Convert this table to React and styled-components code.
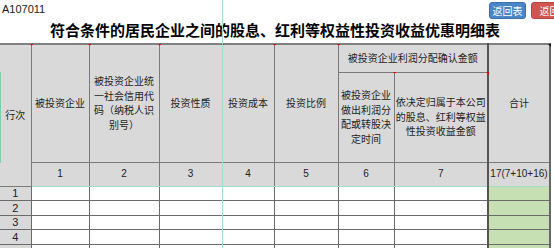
import React from 'react';
import styled, { createGlobalStyle } from 'styled-components';

const Global = createGlobalStyle`
  html, body { margin: 0; padding: 0; background: #fff; overflow: hidden; }
  body { font-family: "Liberation Sans", Arial, sans-serif; }
`;

const Page = styled.div`
  position: relative;
  width: 554px;
  height: 248px;
  overflow: hidden;
  background: #fff;
`;

const TopBar = styled.div`
  display: flex;
  justify-content: space-between;
  align-items: flex-start;
  width: 568px;
  height: 19px;
`;

const Code = styled.div`
  font: 11px/12px "Liberation Sans", Arial, sans-serif;
  color: #1a1a1a;
  padding: 3px 0 0 2px;
`;

const Buttons = styled.div`
  display: flex;
  gap: 5px;
  padding-top: 2px;
`;

const Btn = styled.button`
  width: 37px;
  height: 17px;
  padding: 0;
  border-radius: 3px;
  border: 1px solid ${(p) => (p.$danger ? '#b8423e' : '#3a72ae')};
  background: ${(p) => (p.$danger ? '#d05450' : '#4a86c6')};
  color: #fff;
  font: 10px/15px "Noto Sans CJK SC", sans-serif;
  white-space: nowrap;
  overflow: hidden;
`;

const Title = styled.h1`
  margin: 0;
  width: 550px;
  height: 24px;
  text-align: center;
  font: 700 15px/22px "Noto Sans CJK SC", sans-serif;
  color: #000;
`;

const Sheet = styled.table`
  border-collapse: collapse;
  table-layout: fixed;
  width: 550px;
  border-top: 2px solid #808080;
`;

const HeadRow = styled.tr`
  height: ${(p) => p.$h}px;
`;

const HeadCell = styled.th`
  position: relative;
  background: #d9d9d9;
  border: 1px solid #7a7a7a;
  border-left: ${(p) => (p.$thick ? '2px solid #555' : p.$edge ? 'none' : '1px solid #7a7a7a')};
  border-right: ${(p) => (p.$thickR ? '2px solid #666' : '1px solid #7a7a7a')};
  padding: 0 1px;
  text-align: center;
  vertical-align: middle;
  font: 400 10px/14.5px "Noto Sans CJK SC", sans-serif;
  color: #1e1e1e;
`;

const NumCell = styled.td`
  background: #d9d9d9;
  border: 1px solid #7a7a7a;
  border-bottom: 1px solid #a6dcc5;
  border-left: ${(p) => (p.$thick ? '2px solid #555' : '1px solid #7a7a7a')};
  border-right: ${(p) => (p.$thickR ? '2px solid #666' : '1px solid #7a7a7a')};
  text-align: center;
  vertical-align: middle;
  font: 10px/12px "Liberation Sans", Arial, sans-serif;
  color: #222;
  padding: 0;
`;

const DataRow = styled.tr`
  height: 14.6px;
`;

const RowHead = styled.td`
  background: #d9d9d9;
  border: 1px solid #6a6a6a;
  border-left: none;
  text-align: center;
  font: 11px/12px "Liberation Sans", Arial, sans-serif;
  color: #222;
  padding: 0;
`;

const DataCell = styled.td`
  background: ${(p) => (p.$total ? '#c6e0b4' : '#fff')};
  border: 1px solid #6a6a6a;
  border-left: ${(p) => (p.$total ? '2px solid #555' : '1px solid #6a6a6a')};
  border-right: ${(p) => (p.$total ? '2px solid #666' : '1px solid #6a6a6a')};
  padding: 0;
`;

const Note = styled.span`
  position: absolute;
  top: -1px;
  right: -2px;
  width: 0;
  height: 0;
  border-top: 3px solid ${(p) => (p.$dark ? '#111' : '#e00')};
  border-left: 3px solid transparent;
`;

const FreezeLine = styled.div`
  position: absolute;
  left: 222px;
  top: 0;
  width: 1px;
  height: 248px;
  background: #a6dcc5;
  pointer-events: none;
`;

const EdgeMark = styled.div`
  position: absolute;
  left: 0;
  top: 72px;
  width: 1px;
  height: 91px;
  background: #7fd0ad;
  pointer-events: none;
`;

const widths = [31, 58, 70, 63, 52, 64, 56, 94, 62];
const nums = ['1', '2', '3', '4', '5', '6', '7'];

export default function App() {
  return (
    <Page>
      <Global />
      <TopBar>
        <Code>A107011</Code>
        <Buttons>
          <Btn>返回表</Btn>
          <Btn $danger>返回</Btn>
        </Buttons>
      </TopBar>
      <Title>符合条件的居民企业之间的股息、红利等权益性投资收益优惠明细表</Title>
      <Sheet>
        <colgroup>
          {widths.map((w, i) => (
            <col key={i} style={{ width: w }} />
          ))}
        </colgroup>
        <thead>
          <HeadRow $h={28}>
            <HeadCell rowSpan={3} $edge>
              行次<Note />
            </HeadCell>
            <HeadCell rowSpan={2}>被投资企业<Note /></HeadCell>
            <HeadCell rowSpan={2}>被投资企业统一社会信用代码（纳税人识别号）<Note /></HeadCell>
            <HeadCell rowSpan={2}>投资性质<Note /></HeadCell>
            <HeadCell rowSpan={2}>投资成本<Note /></HeadCell>
            <HeadCell rowSpan={2}>投资比例<Note /></HeadCell>
            <HeadCell colSpan={2}>被投资企业利润分配确认金额</HeadCell>
            <HeadCell rowSpan={2} $thick $thickR>合计<Note $dark /></HeadCell>
          </HeadRow>
          <HeadRow $h={90}>
            <HeadCell>被投资企业做出利润分配或转股决定时间<Note /></HeadCell>
            <HeadCell>依决定归属于本公司的股息、红利等权益性投资收益金额<Note /></HeadCell>
          </HeadRow>
          <HeadRow $h={24}>
            {nums.map((n) => (
              <NumCell key={n}>{n}</NumCell>
            ))}
            <NumCell $thick $thickR>17(7+10+16)</NumCell>
          </HeadRow>
        </thead>
        <tbody>
          {[1, 2, 3, 4, 5].map((r) => (
            <DataRow key={r}>
              <RowHead>{r < 5 ? r : ''}</RowHead>
              {nums.map((n) => (
                <DataCell key={n} />
              ))}
              <DataCell $total />
            </DataRow>
          ))}
        </tbody>
      </Sheet>
      <FreezeLine />
      <EdgeMark />
    </Page>
  );
}
